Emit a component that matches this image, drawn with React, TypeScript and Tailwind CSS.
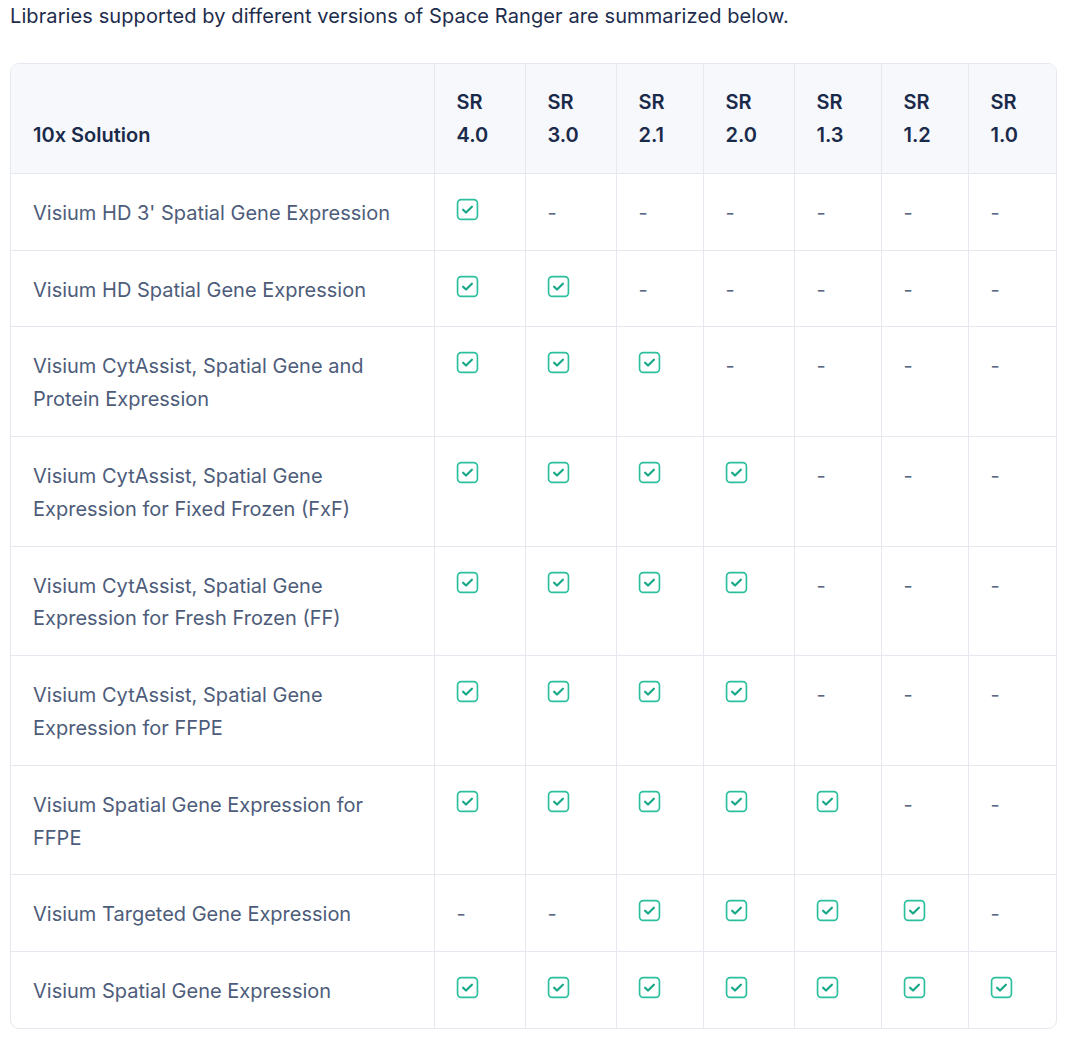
const versions = ["4.0", "3.0", "2.1", "2.0", "1.3", "1.2", "1.0"];

const rows: { name: string; support: boolean[] }[] = [
  { name: "Visium HD 3' Spatial Gene Expression", support: [true, false, false, false, false, false, false] },
  { name: "Visium HD Spatial Gene Expression", support: [true, true, false, false, false, false, false] },
  { name: "Visium CytAssist, Spatial Gene and Protein Expression", support: [true, true, true, false, false, false, false] },
  { name: "Visium CytAssist, Spatial Gene Expression for Fixed Frozen (FxF)", support: [true, true, true, true, false, false, false] },
  { name: "Visium CytAssist, Spatial Gene Expression for Fresh Frozen (FF)", support: [true, true, true, true, false, false, false] },
  { name: "Visium CytAssist, Spatial Gene Expression for FFPE", support: [true, true, true, true, false, false, false] },
  { name: "Visium Spatial Gene Expression for FFPE", support: [true, true, true, true, true, false, false] },
  { name: "Visium Targeted Gene Expression", support: [false, false, true, true, true, true, false] },
  { name: "Visium Spatial Gene Expression", support: [true, true, true, true, true, true, true] },
];

const colWidths = ["w-[423px]", "w-[91px]", "w-[91px]", "w-[87px]", "w-[91px]", "w-[87px]", "w-[87px]", "w-[89px]"];

const CheckIcon = () => (
  <svg width="23" height="23" viewBox="0 0 22 22" fill="none" className="mt-[1px] -ml-[1px]">
    <rect x="1.5" y="1.5" width="19" height="19" rx="3.5" stroke="#2bbf9d" strokeWidth="1.6" />
    <path d="M6.8 11.2 L9.6 13.9 L15.2 8.4" stroke="#17a888" strokeWidth="2.1" strokeLinecap="round" strokeLinejoin="round" />
  </svg>
);

export default function App() {
  return (
    <div className="bg-white min-h-screen px-[10px] text-[20px] leading-[32.8px] text-[#4d5c7a]" style={{ fontFamily: "Inter, 'Noto Sans', sans-serif" }}>
      <p className="text-[#1d2c4c] tracking-[0.1px]">Libraries supported by different versions of Space Ranger are summarized below.</p>
      <div className="mt-[30px] w-[1047px] border border-[#e6e8ef] rounded-[9px] overflow-hidden">
        <table className="table-fixed border-collapse w-full">
          <colgroup>
            {colWidths.map((w, i) => (
              <col key={i} className={w} />
            ))}
          </colgroup>
          <thead>
            <tr className="bg-[#f7f8fc] text-[#1a2a4a] font-semibold">
              <th className="text-left align-bottom px-[22px] pt-[22px] pb-[21.5px] font-semibold">10x Solution</th>
              {versions.map((v) => (
                <th key={v} className="text-left align-bottom px-[22px] pt-[22px] pb-[21.5px] border-l border-[#e6e8ef] font-semibold">
                  SR
                  <br />
                  {v}
                </th>
              ))}
            </tr>
          </thead>
          <tbody>
            {rows.map((r) => (
              <tr key={r.name} className="border-t border-[#e6e8ef]">
                <td className="align-top px-[22px] pt-[23px] pb-[20px]">{r.name}</td>
                {r.support.map((s, i) => (
                  <td key={i} className="align-top px-[22px] pt-[23px] pb-[20px] border-l border-[#e6e8ef]">
                    {s ? <CheckIcon /> : <span className="text-[#5a6884]">-</span>}
                  </td>
                ))}
              </tr>
            ))}
          </tbody>
        </table>
      </div>
    </div>
  );
}
